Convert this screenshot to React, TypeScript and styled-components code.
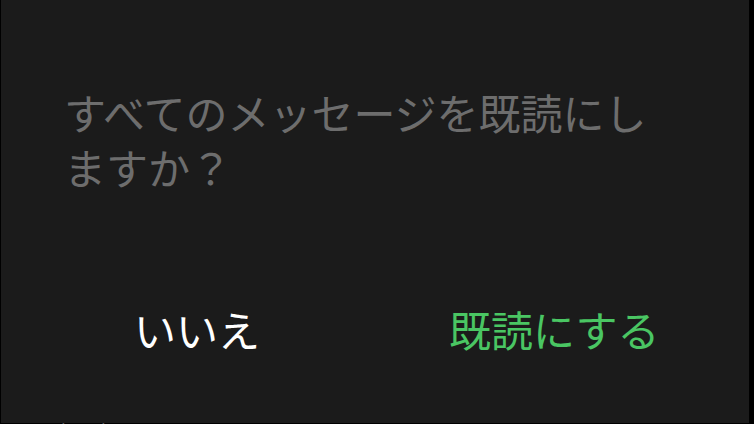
import React from "react";
import styled, { createGlobalStyle } from "styled-components";

const Global = createGlobalStyle`
  html, body { margin: 0; padding: 0; background: #000; }
  body { width: 754px; height: 424px; overflow: hidden; font-family: "Noto Sans CJK JP", "Noto Sans", sans-serif; }
`;

const Screen = styled.div`
  width: 754px;
  height: 424px;
  display: flex;
  flex-direction: column;
  background: #000;
`;

const Dialog = styled.div`
  width: 748px;
  height: 423px;
  flex-shrink: 0;
  margin-left: 1px;
  background: #1b1b1b;
  display: flex;
  flex-direction: column;
  box-sizing: border-box;
  padding: 84px 0 0 63px;
`;

const Message = styled.p`
  margin: 0;
  width: 615px;
  font-size: 42px;
  line-height: 55px;
  color: #6d6d6d;
  letter-spacing: 0;
`;

const Actions = styled.div`
  display: flex;
  align-items: center;
  gap: 189px;
  margin-top: 108px;
  padding-left: 70px;
`;

const ActionButton = styled.button<{ $primary?: boolean }>`
  background: none;
  border: none;
  padding: 0;
  font-family: inherit;
  font-size: 42px;
  line-height: 53px;
  color: ${(p) => (p.$primary ? "#4ac663" : "#ffffff")};
  cursor: pointer;
`;

const Behind = styled.div`
  height: 1px;
  overflow: hidden;
  padding-left: 30px;
  font-size: 20px;
  line-height: 20px;
  color: #777;
`;

export default function App() {
  return (
    <>
      <Global />
      <Screen>
        <Dialog>
          <Message>すべてのメッセージを既読にしますか？</Message>
          <Actions>
            <ActionButton>いいえ</ActionButton>
            <ActionButton $primary>既読にする</ActionButton>
          </Actions>
        </Dialog>
        <Behind>既読既読</Behind>
      </Screen>
    </>
  );
}
